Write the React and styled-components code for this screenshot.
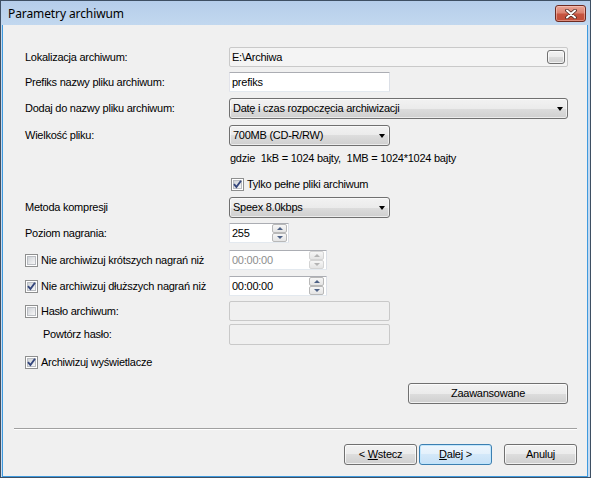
import React from 'react';
import styled, { createGlobalStyle } from 'styled-components';

const Global = createGlobalStyle`
  html, body { margin: 0; padding: 0; background: #ffffff; }
  body { font-family: "Liberation Sans", Arial, sans-serif; font-size: 11px; color: #000; letter-spacing: -0.25px; }
  * { box-sizing: border-box; }
`;

const Window = styled.div`
  position: relative;
  width: 591px;
  height: 478px;
  border: 1px solid #3e4f63;
  background: linear-gradient(to bottom, #b5cdea 0px, #c2d8ef 24px, #c8dcf1 100%);
  padding: 0 2px 0 1px;
  display: flex;
  flex-direction: column;
`;

const TitleBar = styled.div`
  height: 24px;
  flex: none;
  display: flex;
  align-items: flex-start;
  justify-content: space-between;
  padding: 4px 2px 0 6px;
`;

const Title = styled.div`
  font-family: "Noto Sans", "Open Sans", sans-serif;
  font-size: 12px;
  line-height: 18px;
  letter-spacing: -0.1px;
  color: #000;
`;

const CloseButton = styled.div`
  width: 31px;
  height: 17px;
  border: 1px solid #6e2b22;
  border-radius: 3px;
  background: linear-gradient(to bottom, #e9a596 0%, #dc8371 45%, #c65440 55%, #c24d38 100%);
  box-shadow: inset 0 0 0 1px rgba(255, 220, 210, 0.45);
  display: flex;
  align-items: center;
  justify-content: center;
`;

const Panel = styled.div`
  flex: 1;
  background: #f0f0f0;
  border: 1px solid #3f9ade;
  border-top: none;
  display: flex;
  flex-direction: column;
`;

const Form = styled.div`
  padding: 22px 19px 0 22px;
  display: flex;
  flex-direction: column;
`;

const Row = styled.div`
  display: flex;
  align-items: center;
  height: ${(p) => p.$h}px;
  margin-top: ${(p) => p.$mt || 0}px;
  justify-content: ${(p) => (p.$end ? 'flex-end' : 'flex-start')};
`;

const Label = styled.div`
  width: 204px;
  flex: none;
  padding-left: ${(p) => p.$indent || 0}px;
  white-space: nowrap;
  line-height: 13px;
`;

const Note = styled.div`
  white-space: pre;
  margin-left: 1px;
  line-height: 13px;
`;

const TextBox = styled.div`
  width: ${(p) => p.$w}px;
  height: 100%;
  background: ${(p) => p.$bg || '#ffffff'};
  border: 1px solid;
  border-color: ${(p) => (p.$soft ? '#c9c9c9' : '#abadb3 #dbdfe6 #e3e9ef #e2e3ea')};
  border-radius: ${(p) => (p.$soft ? 2 : 1)}px;
  display: flex;
  align-items: center;
  justify-content: space-between;
  padding: 0 ${(p) => p.$pr || 1}px 0 2px;
  color: ${(p) => (p.$dim ? '#8d8d8d' : '#000')};
  white-space: nowrap;
  line-height: 13px;
`;

const BrowseButton = styled.div`
  width: 18px;
  height: 14px;
  border: 1px solid #707070;
  border-radius: 3px;
  background: linear-gradient(to bottom, #f2f2f2 0%, #ebebeb 50%, #dddddd 50%, #cfcfcf 100%);
  box-shadow: inset 0 0 0 1px rgba(255, 255, 255, 0.7);
`;

const Combo = styled.div`
  width: ${(p) => p.$w}px;
  height: 100%;
  border: 1px solid #707070;
  border-radius: 3px;
  background: linear-gradient(to bottom, #f2f2f2 0%, #ebebeb 50%, #dddddd 50%, #cfcfcf 100%);
  box-shadow: inset 0 0 0 1px rgba(255, 255, 255, 0.6);
  display: flex;
  align-items: center;
  justify-content: space-between;
  padding: 0 4px 0 3px;
  white-space: nowrap;
  line-height: 13px;
`;

const Arrow = styled.span`
  width: 0;
  height: 0;
  border-left: 3.5px solid transparent;
  border-right: 3.5px solid transparent;
  border-top: 4px solid #000;
  margin-top: 1px;
`;

const CheckItem = styled.div`
  display: flex;
  align-items: center;
  gap: 3px;
  margin-left: ${(p) => p.$ml || 0}px;
  white-space: nowrap;
  line-height: 13px;
  width: ${(p) => (p.$w ? `${p.$w}px` : 'auto')};
  flex: none;
`;

const Box = styled.span`
  width: 13px;
  height: 13px;
  flex: none;
  border: 1px solid #8e8f8f;
  background: #ffffff;
  padding: 1px;
  display: flex;
`;

const BoxInner = styled.span`
  width: 9px;
  height: 9px;
  border: 1px solid #babdc2;
  background: linear-gradient(135deg, #cfd3d8 0%, #e7e8ea 60%, #f7f7f7 100%);
  display: flex;
  align-items: center;
  justify-content: center;
  overflow: visible;
`;

const Spin = styled.div`
  width: 15px;
  height: 18px;
  display: flex;
  flex-direction: column;
  flex: none;
`;

const SpinBtn = styled.div`
  height: 9px;
  border: 1px solid ${(p) => (p.$off ? '#d4d4d4' : '#b8b8b8')};
  border-radius: 2px;
  background: linear-gradient(to bottom, #f6f6f6, #e4e4e4);
  display: flex;
  align-items: center;
  justify-content: center;
`;

const SpinArrow = styled.span`
  width: 0;
  height: 0;
  border-left: 3px solid transparent;
  border-right: 3px solid transparent;
  ${(p) => (p.$up ? 'border-bottom' : 'border-top')}: 3px solid ${(p) => (p.$off ? '#b4b4b4' : '#4d6185')};
`;

const Button = styled.button`
  width: ${(p) => p.$w}px;
  height: 21px;
  margin-left: ${(p) => p.$ml || 0}px;
  border: 1px solid ${(p) => (p.$primary ? '#3c7fb1' : '#707070')};
  border-radius: 3px;
  background: ${(p) =>
    p.$primary
      ? 'linear-gradient(to bottom, #eef6fd 0%, #e3f0fb 50%, #d3e8f9 50%, #c6e0f6 100%)'
      : 'linear-gradient(to bottom, #f2f2f2 0%, #ebebeb 50%, #dddddd 50%, #cfcfcf 100%)'};
  box-shadow: inset 0 0 0 1px ${(p) => (p.$primary ? 'rgba(190,230,253,0.9)' : 'rgba(255,255,255,0.7)')};
  font-family: "Liberation Sans", Arial, sans-serif;
  font-size: 11px;
  letter-spacing: -0.25px;
  color: #000;
  padding: 0;
  line-height: 13px;
  flex: none;
`;

const Footer = styled.div`
  padding: 0 10px 0 11px;
  margin-top: 24px;
  display: flex;
  flex-direction: column;
`;

const Separator = styled.div`
  height: 2px;
  border-top: 1px solid #a0a0a0;
  border-bottom: 1px solid #ffffff;
`;

const ButtonBar = styled.div`
  display: flex;
  justify-content: flex-end;
  margin-top: 14px;
`;

const CloseGlyph = () => (
  <svg width="12" height="10" viewBox="0 0 12 10">
    <path d="M2 1.5 L10 8.5 M10 1.5 L2 8.5" stroke="#4a2620" strokeWidth="3.6" strokeLinecap="round" />
    <path d="M2 1.5 L10 8.5 M10 1.5 L2 8.5" stroke="#ffffff" strokeWidth="2" strokeLinecap="round" />
  </svg>
);

const Check = ({ checked, children, ml, w }) => (
  <CheckItem $ml={ml} $w={w}>
    <Box>
      <BoxInner>
        {checked && (
          <svg width="9" height="9" viewBox="0 0 9 9" style={{ overflow: 'visible' }}>
            <path d="M1 4.2 L3.4 7 L8 0.8" fill="none" stroke="#34467c" strokeWidth="1.9" />
          </svg>
        )}
      </BoxInner>
    </Box>
    <span>{children}</span>
  </CheckItem>
);

const Spinner = ({ off }) => (
  <Spin>
    <SpinBtn $off={off}>
      <SpinArrow $up $off={off} />
    </SpinBtn>
    <SpinBtn $off={off}>
      <SpinArrow $off={off} />
    </SpinBtn>
  </Spin>
);

export default function App() {
  return (
    <>
      <Global />
      <Window>
        <TitleBar>
          <Title>Parametry archiwum</Title>
          <CloseButton>
            <CloseGlyph />
          </CloseButton>
        </TitleBar>
        <Panel>
          <Form>
            <Row $h={20}>
              <Label>Lokalizacja archiwum:</Label>
              <TextBox $w={339} $bg="#f4f4f4" $soft $pr={2}>
                <span>E:\Archiwa</span>
                <BrowseButton />
              </TextBox>
            </Row>
            <Row $h={20} $mt={5}>
              <Label>Prefiks nazwy pliku archiwum:</Label>
              <TextBox $w={161}>prefiks</TextBox>
            </Row>
            <Row $h={21} $mt={6}>
              <Label>Dodaj do nazwy pliku archiwum:</Label>
              <Combo $w={339}>
                <span>Datę i czas rozpoczęcia archiwizacji</span>
                <Arrow />
              </Combo>
            </Row>
            <Row $h={21} $mt={6}>
              <Label>Wielkość pliku:</Label>
              <Combo $w={161}>
                <span>700MB (CD-R/RW)</span>
                <Arrow />
              </Combo>
            </Row>
            <Row $h={16} $mt={4}>
              <Label />
              <Note>{'gdzie  1kB = 1024 bajty,  1MB = 1024*1024 bajty'}</Note>
            </Row>
            <Row $h={16} $mt={10}>
              <Label />
              <Check checked ml={2}>Tylko pełne pliki archiwum</Check>
            </Row>
            <Row $h={21} $mt={5}>
              <Label>Metoda kompresji</Label>
              <Combo $w={161}>
                <span>Speex 8.0kbps</span>
                <Arrow />
              </Combo>
            </Row>
            <Row $h={20} $mt={5}>
              <Label>Poziom nagrania:</Label>
              <TextBox $w={60}>
                <span>255</span>
                <Spinner />
              </TextBox>
            </Row>
            <Row $h={20} $mt={7}>
              <Check w={204}>Nie archiwizuj krótszych nagrań niż</Check>
              <TextBox $w={98} $dim $pr={2}>
                <span>00:00:00</span>
                <Spinner off />
              </TextBox>
            </Row>
            <Row $h={20} $mt={6}>
              <Check checked w={204}>Nie archiwizuj dłuższych nagrań niż</Check>
              <TextBox $w={98} $pr={2}>
                <span>00:00:00</span>
                <Spinner />
              </TextBox>
            </Row>
            <Row $h={20} $mt={5}>
              <Check w={204}>Hasło archiwum:</Check>
              <TextBox $w={161} $bg="#f0f0f0" $soft />
            </Row>
            <Row $h={21} $mt={3}>
              <Label $indent={18}>Powtórz hasło:</Label>
              <TextBox $w={161} $bg="#f0f0f0" $soft />
            </Row>
            <Row $h={16} $mt={9}>
              <Check checked>Archiwizuj wyświetlacze</Check>
            </Row>
            <Row $h={21} $mt={13} $end>
              <Button $w={160}>Zaawansowane</Button>
            </Row>
          </Form>
          <Footer>
            <Separator />
            <ButtonBar>
              <Button $w={73}>
                &lt; <u>W</u>stecz
              </Button>
              <Button $w={73} $ml={2} $primary>
                <u>D</u>alej &gt;
              </Button>
              <Button $w={73} $ml={12}>
                Anuluj
              </Button>
            </ButtonBar>
          </Footer>
        </Panel>
      </Window>
    </>
  );
}
